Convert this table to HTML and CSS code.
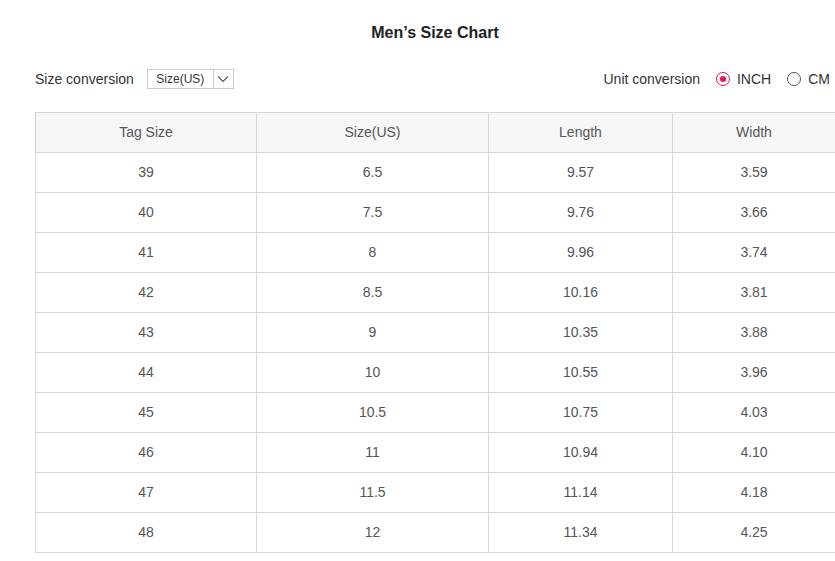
FILE: index.html
```html
<!DOCTYPE html>
<html>
<head>
<meta charset="utf-8">
<link rel="stylesheet" href="styles.css">
</head>
<body>
<div class="wrap">
  <h1 class="title">Men’s Size Chart</h1>
  <div class="controls">
    <div class="ctl">
      <span class="lbl">Size conversion</span>
      <div class="select">
        <span class="sel-val">Size(US)</span>
        <span class="sel-arrow"><svg width="12" height="8" viewBox="0 0 12 8"><path d="M1 1.5 L6 6.5 L11 1.5" fill="none" stroke="#555" stroke-width="1.1"/></svg></span>
      </div>
    </div>
    <div class="ctl">
      <span class="lbl lbl-unit">Unit conversion</span>
      <span class="radio on"><span class="dot"></span></span><span class="rlbl">INCH</span>
      <span class="radio"></span><span class="rlbl">CM</span>
    </div>
  </div>
  <table class="chart">
    <colgroup><col class="c1"><col class="c2"><col class="c3"><col class="c4"></colgroup>
    <thead><tr><th>Tag Size</th><th>Size(US)</th><th>Length</th><th>Width</th></tr></thead>
    <tbody>
      <tr><td>39</td><td>6.5</td><td>9.57</td><td>3.59</td></tr>
      <tr><td>40</td><td>7.5</td><td>9.76</td><td>3.66</td></tr>
      <tr><td>41</td><td>8</td><td>9.96</td><td>3.74</td></tr>
      <tr><td>42</td><td>8.5</td><td>10.16</td><td>3.81</td></tr>
      <tr><td>43</td><td>9</td><td>10.35</td><td>3.88</td></tr>
      <tr><td>44</td><td>10</td><td>10.55</td><td>3.96</td></tr>
      <tr><td>45</td><td>10.5</td><td>10.75</td><td>4.03</td></tr>
      <tr><td>46</td><td>11</td><td>10.94</td><td>4.10</td></tr>
      <tr><td>47</td><td>11.5</td><td>11.14</td><td>4.18</td></tr>
      <tr><td>48</td><td>12</td><td>11.34</td><td>4.25</td></tr>
    </tbody>
  </table>
</div>
</body>
</html>
```

FILE: styles.css
```css
html, body { margin: 0; padding: 0; background: #fff; }
body { font-family: "Liberation Sans", Arial, sans-serif; color: #333; }
.wrap { width: 800px; margin-left: 35px; padding-top: 23px; }
.title { margin: 0; font-size: 16px; font-weight: bold; text-align: center; line-height: 20px; color: #222; }
.controls { display: flex; justify-content: space-between; align-items: center; margin-top: 26px; height: 20px; }
.ctl { display: flex; align-items: center; }
.lbl { font-size: 14px; color: #333; margin-right: 13px; }
.lbl-unit { margin-right: 14px; }
.select { display: flex; height: 20px; box-sizing: border-box; border: 1px solid #ccc; width: 87px; }
.sel-val { flex: 1; font-size: 12px; color: #333; text-align: center; line-height: 18px; }
.sel-arrow { width: 19px; border-left: 1px solid #ccc; display: flex; align-items: center; justify-content: center; }
.radio { width: 14px; height: 14px; box-sizing: border-box; border: 1px solid #555; border-radius: 50%; margin-right: 7px; margin-left: 2px; display: flex; align-items: center; justify-content: center; }
.radio.on { border-color: #e4135c; }
.dot { width: 6px; height: 6px; border-radius: 50%; background: #e4135c; }
.rlbl { font-size: 14px; color: #333; margin-right: 14px; }
.rlbl:last-child { margin-right: 5px; }
.chart { margin-top: 23px; border-collapse: collapse; width: 800px; table-layout: fixed; }
.c1 { width: 221px; } .c2 { width: 232px; } .c3 { width: 184px; } .c4 { width: 163px; }
.chart th, .chart td { border: 1px solid #d6d6d6; height: 37px; padding: 0 0 2px 0; text-align: center; font-size: 14px; font-weight: normal; color: #555; }
.chart th { background: #f7f7f7; }
```
